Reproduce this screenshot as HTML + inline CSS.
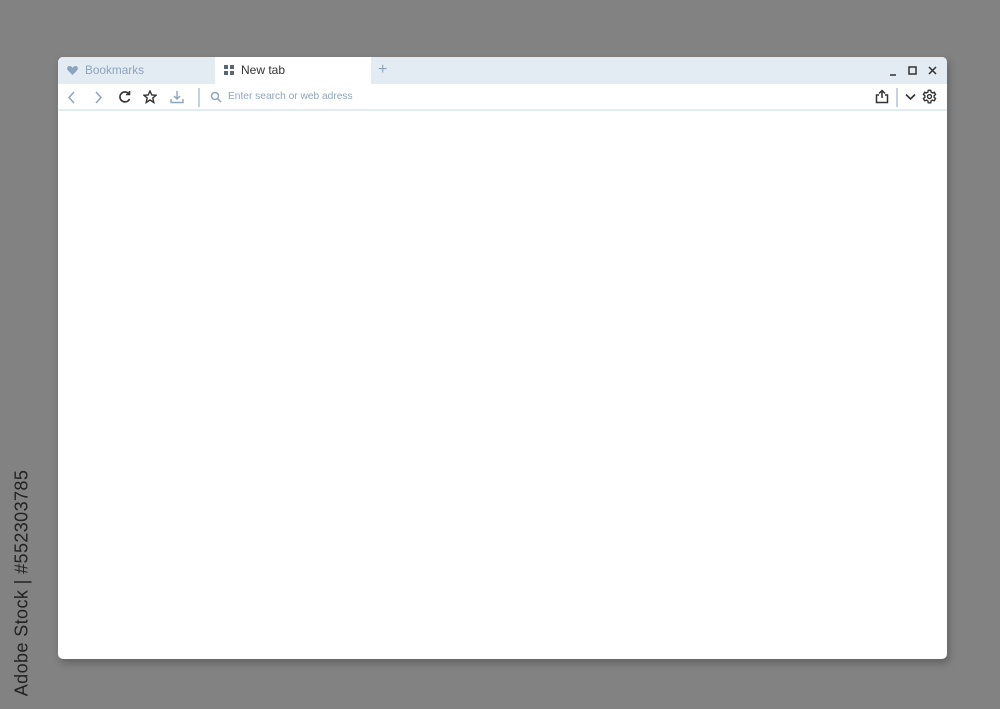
<!DOCTYPE html>
<html><head><meta charset="utf-8"><style>
*{margin:0;padding:0;box-sizing:border-box}
body{width:1000px;height:709px;background:#828282;position:relative;overflow:hidden;font-family:"Liberation Sans",sans-serif}
.win{position:absolute;left:58px;top:57px;width:889px;height:602px;background:#fff;border-radius:5px;overflow:hidden;box-shadow:2px 4px 8px rgba(0,0,0,.25)}
.tabs{position:absolute;left:0;top:0;width:100%;height:27px;background:#e3ebf3}
.tab{position:absolute;left:157px;top:0;width:156px;height:27px;background:#fff}
.tb{position:absolute;left:0;top:27px;width:100%;height:27px;border-bottom:2px solid #e3ebf3}
.t{position:absolute;font-size:11px;white-space:nowrap}
svg{position:absolute}
.st{position:absolute;left:22px;top:583px;transform:translate(-50%,-50%) rotate(-90deg);font-size:18px;letter-spacing:.4px;color:#222;white-space:nowrap}
</style></head><body>
<div class="win">
<div class="tabs">
<svg style="left:9px;top:8px" width="11" height="10" viewBox="0 0 11 10"><path d="M5.5 10L1 5.5C-.5 4 0 1 2.5 1 4 1 5 2 5.5 3 6 2 7 1 8.5 1 11 1 11.5 4 10 5.5Z" fill="#8ea4bd"/></svg>
<div class="t" style="left:27px;top:6px;color:#8ea4bd;font-size:11.8px">Bookmarks</div>
<div class="tab">
<svg style="left:9px;top:8px" width="10" height="10"><rect x="0" y="0" width="4" height="4" fill="#5a6675"/><rect x="6" y="0" width="4" height="4" fill="#5a6675"/><rect x="0" y="6" width="4" height="4" fill="#5a6675"/><rect x="6" y="6" width="4" height="4" fill="#5a6675"/></svg>
<div class="t" style="left:26px;top:6px;color:#333;font-size:12px">New tab</div>
</div>
<div class="t" style="left:320px;top:4px;color:#8ea4bd;font-size:16px">+</div>
<svg style="left:830px;top:8px" width="50" height="12" fill="none" stroke="#333" stroke-width="1.5"><path d="M2 10H8"/><rect x="21" y="2" width="7" height="7"/><path d="M41 2L48 9M48 2L41 9"/></svg>
</div>
<div class="tb">
<svg style="left:10px;top:7px" width="60" height="13" fill="none" stroke="#8ea4bd" stroke-width="1.5"><path d="M6 1L1 6.5 6 12"/><path d="M28 1L33 6.5 28 12"/></svg>
<svg style="left:60px;top:6px" width="14" height="14" fill="none" stroke="#333" stroke-width="1.6"><path d="M11 4A5 5 0 1 0 11.5 9"/><path d="M11.5 1V4.5H8"/></svg>
<svg style="left:85px;top:6px" width="14" height="14" fill="none" stroke="#333" stroke-width="1.4"><path d="M7 1L8.8 5 13 5.3 9.8 8 10.8 12.5 7 10 3.2 12.5 4.2 8 1 5.3 5.2 5Z"/></svg>
<svg style="left:112px;top:6px" width="14" height="14" fill="none" stroke="#8ea4bd" stroke-width="1.4"><path d="M7 1V9M4 6L7 9 10 6M1 9V12.5H13V9"/></svg>
<div style="position:absolute;left:140px;top:4px;width:2px;height:19px;background:#c4d3e3"></div>
<svg style="left:152px;top:7px" width="12" height="12" fill="none" stroke="#8ea4bd" stroke-width="1.5"><circle cx="5" cy="5" r="3.5"/><path d="M7.5 7.5L11 11"/></svg>
<div class="t" style="left:170px;top:7px;color:#8ea4bd;font-size:10.2px">Enter search or web adress</div>
<svg style="left:817px;top:5px" width="14" height="15" fill="none" stroke="#333" stroke-width="1.5"><path d="M4 6H1.5V13.5H12.5V6H10M7 9V1.5M4 4.5L7 1.5 10 4.5"/></svg>
<div style="position:absolute;left:838px;top:4px;width:2px;height:19px;background:#c4d3e3"></div>
<svg style="left:847px;top:9px" width="11" height="8" fill="none" stroke="#333" stroke-width="1.6"><path d="M1 1.5L5.5 6 10 1.5"/></svg>
<svg style="left:864px;top:5px" width="15" height="15" viewBox="0 0 24 24" fill="none" stroke="#333" stroke-width="2.2"><circle cx="12" cy="12" r="3.2"/><path d="M10 2h4l.6 3 2.2 1.2 2.9-1 2 3.5-2.3 2v2.6l2.3 2-2 3.5-2.9-1-2.2 1.2-.6 3h-4l-.6-3-2.2-1.2-2.9 1-2-3.5 2.3-2v-2.6l-2.3-2 2-3.5 2.9 1L9.4 5z"/></svg>
</div>
</div>
<div class="st">Adobe Stock | #552303785</div>
</body></html>
